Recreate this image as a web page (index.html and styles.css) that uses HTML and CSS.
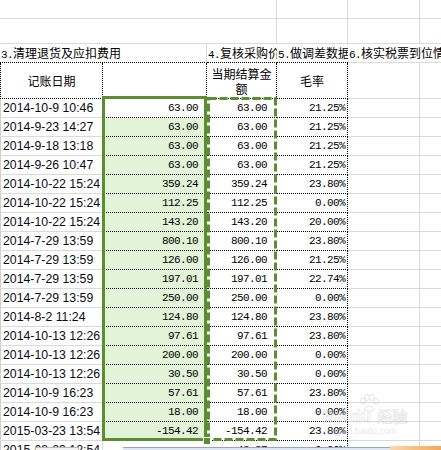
FILE: index.html
```html
<!DOCTYPE html>
<html>
<head>
<meta charset="utf-8">
<link rel="stylesheet" href="styles.css">
</head>
<body>
<div class="sheet">
  <div class="grid">
    <!-- row 1 -->
    <div class="c span3"></div><div class="c"></div><div class="c"></div><div class="c nr"></div>
    <!-- row 2 -->
    <div class="c span3"></div><div class="c"></div><div class="c"></div><div class="c nr"></div>
    <!-- row 3 -->
    <div class="c r3 span2 dotb"><span class="hw">3.</span>清理退货及应扣费用</div>
    <div class="c r3 nr dotb c3"><span class="hw">4.</span>复核采购价</div>
    <div class="c r3 nr dotb"><span class="hw">5.</span>做调差数据</div>
    <div class="c r3 span2e"><span class="hw">6.</span>核实税票到位情况</div>
    <!-- row 4 header -->
    <div class="c hd dotl dotr dotb">记账日期</div>
    <div class="c hd dotr dotb"></div>
    <div class="c hd dotr dotb">当期结算金额</div>
    <div class="c hd dotr dotb">毛率</div>
    <div class="c"></div><div class="c nr"></div>
    <!-- data -->
    <div class="c dt">2014-10-9 10:46</div><div class="c num nb dotb act">63.00</div><div class="c num nc dotb">63.00</div><div class="c num nd dotb dotr">21.25%</div><div class="c"></div><div class="c nr"></div>
    <div class="c dt">2014-9-23 14:27</div><div class="c num nb dotb sel">63.00</div><div class="c num nc dotb">63.00</div><div class="c num nd dotb dotr">21.25%</div><div class="c"></div><div class="c nr"></div>
    <div class="c dt">2014-9-18 13:18</div><div class="c num nb dotb sel">63.00</div><div class="c num nc dotb">63.00</div><div class="c num nd dotb dotr">21.25%</div><div class="c"></div><div class="c nr"></div>
    <div class="c dt">2014-9-26 10:47</div><div class="c num nb dotb sel">63.00</div><div class="c num nc dotb">63.00</div><div class="c num nd dotb dotr">21.25%</div><div class="c"></div><div class="c nr"></div>
    <div class="c dt">2014-10-22 15:24</div><div class="c num nb dotb sel">359.24</div><div class="c num nc dotb">359.24</div><div class="c num nd dotb dotr">23.80%</div><div class="c"></div><div class="c nr"></div>
    <div class="c dt">2014-10-22 15:24</div><div class="c num nb dotb sel">112.25</div><div class="c num nc dotb">112.25</div><div class="c num nd dotb dotr">0.00%</div><div class="c"></div><div class="c nr"></div>
    <div class="c dt">2014-10-22 15:24</div><div class="c num nb dotb sel">143.20</div><div class="c num nc dotb">143.20</div><div class="c num nd dotb dotr">20.00%</div><div class="c"></div><div class="c nr"></div>
    <div class="c dt">2014-7-29 13:59</div><div class="c num nb dotb sel">800.10</div><div class="c num nc dotb">800.10</div><div class="c num nd dotb dotr">23.80%</div><div class="c"></div><div class="c nr"></div>
    <div class="c dt">2014-7-29 13:59</div><div class="c num nb dotb sel">126.00</div><div class="c num nc dotb">126.00</div><div class="c num nd dotb dotr">21.25%</div><div class="c"></div><div class="c nr"></div>
    <div class="c dt">2014-7-29 13:59</div><div class="c num nb dotb sel">197.01</div><div class="c num nc dotb">197.01</div><div class="c num nd dotb dotr">22.74%</div><div class="c"></div><div class="c nr"></div>
    <div class="c dt">2014-7-29 13:59</div><div class="c num nb dotb sel">250.00</div><div class="c num nc dotb">250.00</div><div class="c num nd dotb dotr">0.00%</div><div class="c"></div><div class="c nr"></div>
    <div class="c dt">2014-8-2 11:24</div><div class="c num nb dotb sel">124.80</div><div class="c num nc dotb">124.80</div><div class="c num nd dotb dotr">23.80%</div><div class="c"></div><div class="c nr"></div>
    <div class="c dt">2014-10-13 12:26</div><div class="c num nb dotb sel">97.61</div><div class="c num nc dotb">97.61</div><div class="c num nd dotb dotr">23.80%</div><div class="c"></div><div class="c nr"></div>
    <div class="c dt">2014-10-13 12:26</div><div class="c num nb dotb sel">200.00</div><div class="c num nc dotb">200.00</div><div class="c num nd dotb dotr">0.00%</div><div class="c"></div><div class="c nr"></div>
    <div class="c dt">2014-10-13 12:26</div><div class="c num nb dotb sel">30.50</div><div class="c num nc dotb">30.50</div><div class="c num nd dotb dotr">0.00%</div><div class="c"></div><div class="c nr"></div>
    <div class="c dt">2014-10-9 16:23</div><div class="c num nb dotb sel">57.61</div><div class="c num nc dotb">57.61</div><div class="c num nd dotb dotr">23.80%</div><div class="c"></div><div class="c nr"></div>
    <div class="c dt">2014-10-9 16:23</div><div class="c num nb dotb sel">18.00</div><div class="c num nc dotb">18.00</div><div class="c num nd dotb dotr">0.00%</div><div class="c"></div><div class="c nr"></div>
    <div class="c dt">2015-03-23 13:54</div><div class="c num nb dotb sel">-154.42</div><div class="c num nc dotb">-154.42</div><div class="c num nd dotb dotr">23.80%</div><div class="c"></div><div class="c nr"></div>
    <div class="c dt">2015-03-23 12:54</div><div class="c num nb dotb"></div><div class="c num nc dotb">-43.37</div><div class="c num nd dotb dotr">0.00%</div><div class="c"></div><div class="c nr"></div>
  </div>

  <div class="selbox"></div>
  <svg class="copybox" width="441" height="450" viewBox="0 0 441 450">
    <rect x="208.5" y="98.5" width="67" height="341" fill="none" stroke="#5b8d31" stroke-width="3" stroke-dasharray="8 3"/>
  </svg>
  <div class="handle"></div>

  <div class="watermark">
    <svg class="paw" width="22" height="20" viewBox="0 0 22 20">
      <g fill="none" stroke="#c8c8c8" stroke-width="1.2">
        <ellipse cx="5" cy="7" rx="2.4" ry="3"/>
        <ellipse cx="9" cy="3.5" rx="2.4" ry="3"/>
        <ellipse cx="14" cy="3.5" rx="2.4" ry="3"/>
        <ellipse cx="18" cy="7" rx="2.4" ry="3"/>
        <path d="M6 16 Q11 8 16 16 Q11 19 6 16 Z"/>
      </g>
    </svg>
    <div class="wm-line"><span class="wm-bai">Bai</span><span class="wm-du">du</span><span class="wm-cn">经验</span></div>
    <div class="wm-url">jingyan.baidu.com</div>
  </div>

  <div class="tab"></div>
  <div class="bar"></div>
  <div class="orange"></div>
</div>
</body>
</html>
```

FILE: styles.css
```css
html, body {
  margin: 0;
  padding: 0;
  background: #fff;
  overflow: hidden;
}

.sheet {
  position: relative;
  width: 441px;
  height: 450px;
  overflow: hidden;
  font-family: "Noto Sans CJK SC", "Noto Sans CJK JP", sans-serif;
  font-size: 12px;
  color: #000;
}

.grid {
  display: grid;
  grid-template-columns: 103px 104px 70px 71px 72px 40px;
  grid-template-rows: 19px 25px 19px 36px repeat(19, 19px);
  width: 460px;
}

.c {
  box-sizing: border-box;
  border-right: 1px solid #dadada;
  border-bottom: 1px solid #dadada;
  overflow: hidden;
  white-space: nowrap;
}

.nr { border-right: none; }
.span3 { grid-column: span 3; }
.span2 { grid-column: span 2; }
.span2e { grid-column: span 2; border-right: none; }

.dotb { border-bottom: 1px dotted #000; }
.dotr { border-right: 1px dotted #000; }
.dotl { border-left: 1px dotted #000; }

.hw {
  font-family: "Liberation Mono", monospace;
  font-size: 11px;
  letter-spacing: -0.6px;
}

.r3 {
  line-height: 18px;
  padding-left: 1px;
}

.c3 { padding-left: 1px; }

.hd {
  display: flex;
  align-items: center;
  justify-content: center;
  text-align: center;
  white-space: normal;
  line-height: 15px;
}

.dt {
  font-family: "Liberation Sans", Arial, sans-serif;
  font-size: 12.3px;
  line-height: 18px;
  padding-left: 2px;
  border-left: 1px solid #cfcfcf;
  color: #0a0a14;
}

.num {
  font-family: "Liberation Mono", monospace;
  font-size: 11px;
  letter-spacing: -0.6px;
  line-height: 18px;
  text-align: right;
}

.nb { padding-right: 9px; border-right: none; }
.nc { padding-right: 10px; border-right: none; }
.nd { padding-right: 2px; }

.sel { background: #e2f3d8; }
.act { background: #fff; }

.selbox {
  position: absolute;
  left: 102px;
  top: 96px;
  width: 105px;
  height: 345px;
  box-sizing: border-box;
  border: 3px solid #5b8d31;
}

.copybox {
  position: absolute;
  left: 0;
  top: 0;
}

.handle {
  position: absolute;
  left: 203px;
  top: 437px;
  width: 6px;
  height: 6px;
  background: #5b8d31;
  border: 1px solid #fff;
}

.watermark {
  position: absolute;
  left: 322px;
  top: 394px;
  width: 110px;
  opacity: 0.4;
}

.paw {
  position: absolute;
  left: 36px;
  top: 0;
}

.wm-line {
  position: absolute;
  left: 0;
  top: 11px;
  font-family: "Liberation Sans", Arial, sans-serif;
  font-weight: bold;
  font-size: 17px;
  color: #fff;
  -webkit-text-stroke: 0.8px #c4c4c4;
  white-space: nowrap;
}

.wm-du { margin-left: 2px; }

.wm-cn {
  font-family: "Noto Sans CJK SC", sans-serif;
  font-size: 15px;
  margin-left: 6px;
}

.wm-url {
  position: absolute;
  left: 2px;
  top: 32px;
  font-family: "Liberation Sans", Arial, sans-serif;
  font-size: 9px;
  color: #c8c8c8;
  white-space: nowrap;
}

.tab {
  position: absolute;
  left: 35px;
  top: 447px;
  width: 42px;
  height: 4px;
  background: #f2f2f2;
  border-top: 1px solid #b8b8b8;
  border-left: 1px solid #b8b8b8;
  border-right: 1px solid #b8b8b8;
}

.bar {
  position: absolute;
  left: 123px;
  top: 447px;
  width: 267px;
  height: 4px;
  background: #dfe7f3;
  border-top: 1px solid #9aa6b8;
}

.orange {
  position: absolute;
  left: 390px;
  top: 446px;
  width: 60px;
  height: 5px;
  background: linear-gradient(90deg, #f7d9b0, #f0a04a);
}
```
